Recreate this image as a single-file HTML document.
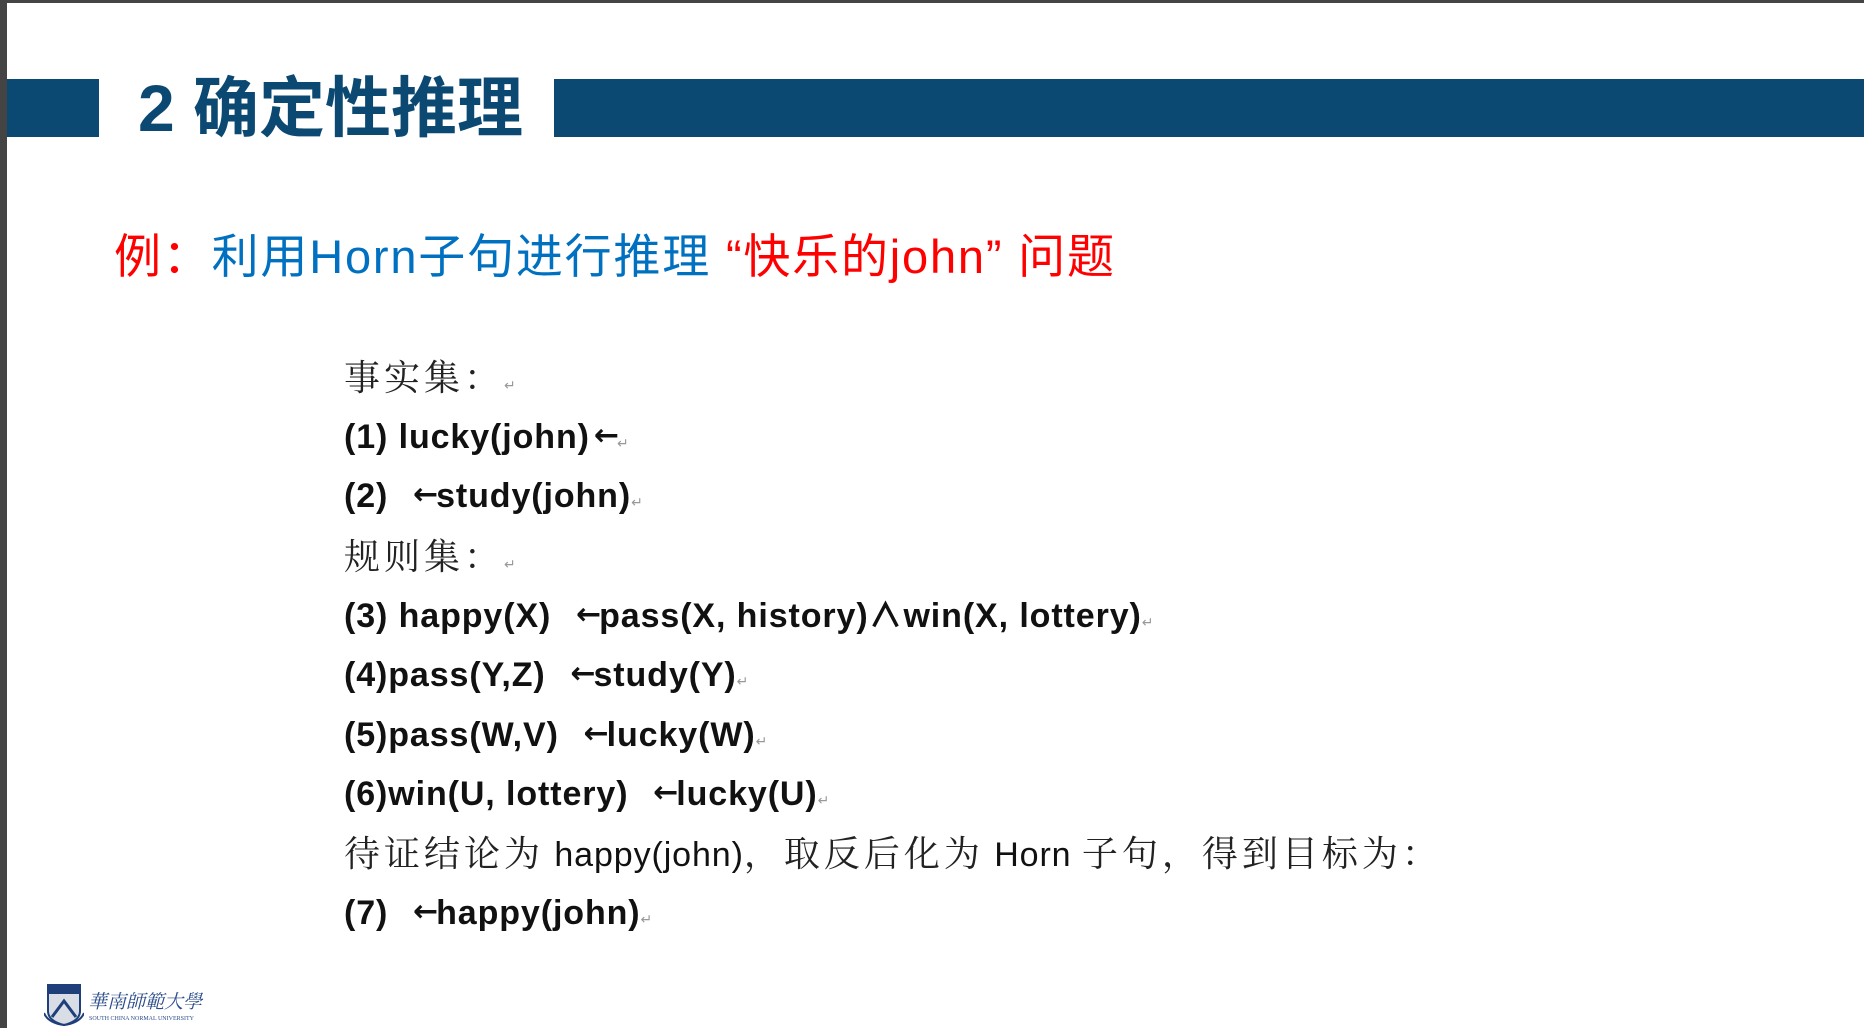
<!DOCTYPE html>
<html><head><meta charset="utf-8"><style>
html,body{margin:0;padding:0;}
body{width:1864px;height:1028px;position:relative;overflow:hidden;background:#fff;font-family:"Liberation Sans","Noto Sans CJK SC",sans-serif;}
.a{position:absolute;white-space:nowrap;}
.l{position:absolute;left:344px;font-size:34px;line-height:40px;font-weight:bold;color:#111;white-space:nowrap;letter-spacing:0.9px;font-family:"Liberation Sans","Noto Sans CJK SC",sans-serif;}
.cn{font-family:"Noto Serif CJK SC","Liberation Serif",serif;letter-spacing:4px;color:#222;font-weight:normal;font-size:36px;}
.r{font-size:14px;color:#999;letter-spacing:0;font-weight:normal;}
.ar{font-family:"DejaVu Sans",sans-serif;font-size:30px;position:relative;top:-3px;letter-spacing:-2px;margin-left:4px;}
</style></head><body>
<div class="a" style="left:0;top:0;width:1864px;height:3px;background:#444;"></div>
<div class="a" style="left:0;top:0;width:7px;height:1028px;background:#444;"></div>
<div class="a" style="left:7px;top:79px;width:92px;height:58px;background:#0b4872;"></div>
<div class="a" style="left:554px;top:79px;width:1310px;height:58px;background:#0b4872;"></div>
<div class="a" style="left:138px;top:70px;font-size:66px;font-weight:bold;color:#0b4872;line-height:76px;font-family:'Liberation Sans','Noto Sans CJK SC',sans-serif;">2 确定性推理</div>
<div class="a" style="left:114px;top:228px;font-size:47px;line-height:58px;color:#0070c0;letter-spacing:1.8px;"><span style="color:#f00">例：</span>利用Horn子句进行推理<span style="color:#f00">&nbsp;“快乐的john”&nbsp;问题</span></div>

<div class="l cn" style="top:356px">事实集：<span class="r">↵</span></div>
<div class="l" style="top:417px">(1) lucky(john)<span class="ar">←</span><span class="r">↵</span></div>
<div class="l" style="top:476px">(2) &nbsp;<span class="ar">←</span>study(john)<span class="r">↵</span></div>
<div class="l cn" style="top:535px">规则集：<span class="r">↵</span></div>
<div class="l" style="top:596px">(3) happy(X) &nbsp;<span class="ar">←</span>pass(X, history)∧win(X, lottery)<span class="r">↵</span></div>
<div class="l" style="top:655px">(4)pass(Y,Z) &nbsp;<span class="ar">←</span>study(Y)<span class="r">↵</span></div>
<div class="l" style="top:715px">(5)pass(W,V) &nbsp;<span class="ar">←</span>lucky(W)<span class="r">↵</span></div>
<div class="l" style="top:774px">(6)win(U, lottery) &nbsp;<span class="ar">←</span>lucky(U)<span class="r">↵</span></div>
<div class="l" style="top:832px;font-weight:normal"><span class="cn">待证结论为</span> happy(john)<span class="cn">，取反后化为</span> Horn <span class="cn">子句，得到目标为：</span></div>
<div class="l" style="top:893px">(7) &nbsp;<span class="ar">←</span>happy(john)<span class="r">↵</span></div>

<svg class="a" style="left:44px;top:983px" width="40" height="43" viewBox="0 0 40 43">
<path d="M4 2H36V28Q36 38 20 42Q4 38 4 28Z" fill="#d8dde6" stroke="#1f3f7a" stroke-width="2"/>
<rect x="4" y="2" width="32" height="9" fill="#1f3f7a"/>
<path d="M8 34L20 18L32 34" fill="none" stroke="#1f3f7a" stroke-width="3"/>
<path d="M0 30Q4 40 20 42Q36 40 40 30" fill="none" stroke="#1f3f7a" stroke-width="2"/>
</svg>
<div class="a" style="left:88px;top:990px;font-size:19px;color:#2a4b8a;font-family:'Noto Serif CJK SC',serif;font-style:italic;line-height:22px;">華南師範大學</div>
<div class="a" style="left:89px;top:1016px;font-size:6px;color:#2a4b8a;font-family:'Liberation Serif',serif;">SOUTH CHINA NORMAL UNIVERSITY</div>
</body></html>
